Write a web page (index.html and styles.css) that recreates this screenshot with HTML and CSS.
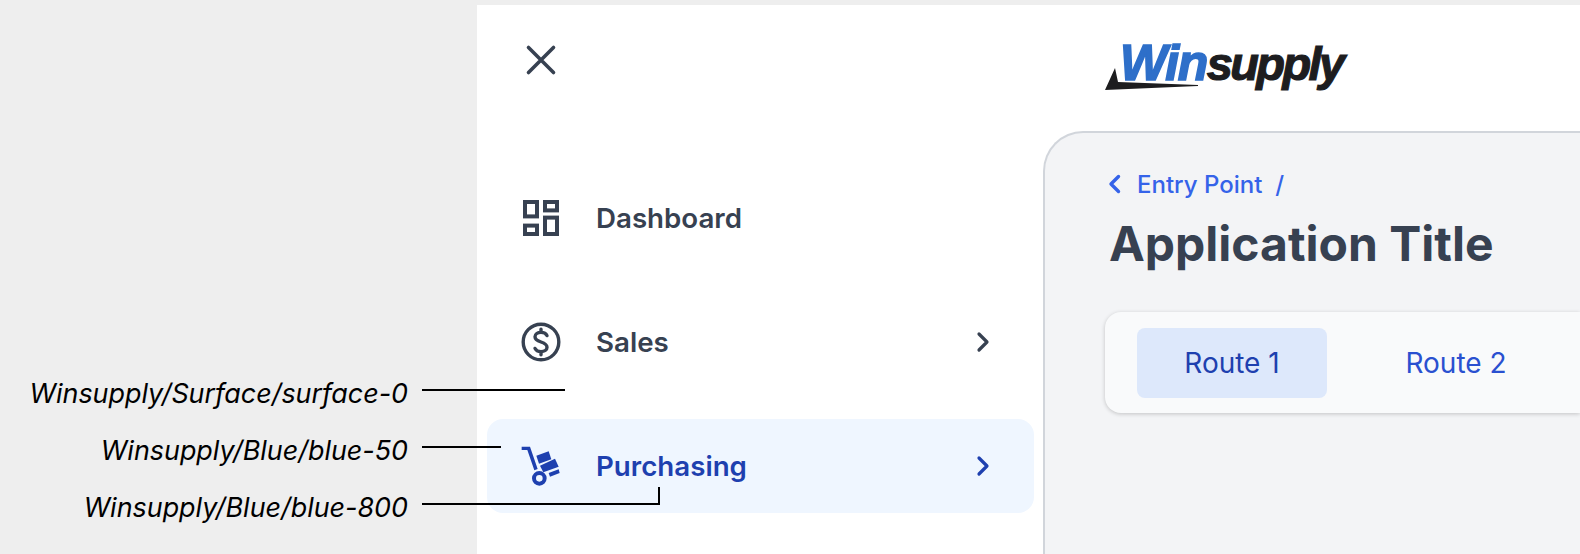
FILE: index.html
```html
<!DOCTYPE html>
<html lang="en">
<head>
    <meta charset="UTF-8">
    <meta name="viewport" content="width=device-width, initial-scale=1.0">
    <title>Navigation colours</title>
    <link rel="stylesheet" href="styles.css">
</head>
<body>
    <div class="frame">
        <div class="app">
            <aside class="sidebar">
                <button class="close-btn" aria-label="Close">
                    <svg width="34" height="34" viewBox="0 0 34 34" fill="none" stroke="currentColor" stroke-width="3.6" stroke-linecap="round">
                        <path d="M4.5 4.5 29.5 29.5M29.5 4.5 4.5 29.5"/>
                    </svg>
                </button>
                <nav class="nav">
                    <a class="nav-item">
                        <svg class="nav-icon" viewBox="-2 -2 40 40" fill="none" stroke="currentColor" stroke-width="4">
                            <rect x="2" y="2" width="12" height="14.4"/>
                            <rect x="22" y="2" width="12" height="8.4"/>
                            <rect x="2" y="25.6" width="12" height="8.4"/>
                            <rect x="22" y="17.6" width="12" height="16.4"/>
                        </svg>
                        <span>Dashboard</span>
                    </a>
                    <a class="nav-item">
                        <svg class="nav-icon" viewBox="0 0 40 40" fill="none" stroke="currentColor" stroke-width="3.4" stroke-linecap="round">
                            <circle cx="20" cy="20" r="17.8"/>
                            <path d="M26 13.6C25 11.4 23 10.4 20 10.4 16.6 10.4 14 12 14 14.8 14 18 17 19 20 20 23 21 26 22 26 25.2 26 28 23.4 29.6 20 29.6 17 29.6 15 28.6 14 26.4M20 7.2V10.4M20 29.6V32.8"/>
                        </svg>
                        <span>Sales</span>
                        <svg class="nav-chevron" viewBox="0 0 14 22" fill="none" stroke="currentColor" stroke-width="3.2" stroke-linecap="round" stroke-linejoin="round">
                            <path d="M3 3 11 11 3 19"/>
                        </svg>
                    </a>
                    <a class="nav-item active">
                        <svg class="nav-icon" viewBox="33 33 120 120" fill="currentColor">
                            <path d="M35 35H60L83 102 73 106 52 45H35Z"/>
                            <path fill-rule="evenodd" d="M88 108A22 22 0 1 0 88 152 22 22 0 1 0 88 108ZM88 120A10 10 0 1 1 88 140 10 10 0 1 1 88 120Z"/>
                            <path d="M79 62 116 49 124 73 87 86Z"/>
                            <path d="M90 92 135 71 146 95 100 112Z"/>
                            <path d="M116 114 146 103 149 114 120 125Z"/>
                        </svg>
                        <span>Purchasing</span>
                        <svg class="nav-chevron" viewBox="0 0 14 22" fill="none" stroke="currentColor" stroke-width="3.2" stroke-linecap="round" stroke-linejoin="round">
                            <path d="M3 3 11 11 3 19"/>
                        </svg>
                    </a>
                </nav>
            </aside>
            <main class="main">
                <header class="topbar">
                    <div class="logo">
                        <svg class="logo-swoosh" width="95" height="24" viewBox="0 0 95 24">
                            <path d="M0 22 10 0 13 14 93 17V18Z" fill="#1d1d1f"/>
                        </svg>
                        <span class="logo-win">Win</span><span class="logo-supply">supply</span>
                    </div>
                </header>
                <section class="card">
                    <div class="breadcrumb">
                        <svg width="14" height="20" viewBox="0 0 14 20" fill="none" stroke="currentColor" stroke-width="3.4" stroke-linecap="round" stroke-linejoin="round">
                            <path d="M11.5 2.5 4 10 11.5 17.5"/>
                        </svg>
                        <span class="crumb-link">Entry Point</span>
                        <span class="crumb-sep">/</span>
                    </div>
                    <h1>Application Title</h1>
                    <div class="tabs">
                        <a class="tab active">Route 1</a>
                        <a class="tab">Route 2</a>
                    </div>
                </section>
            </main>
        </div>
    </div>

    <!-- spec labels drawn over the mock -->
    <div class="note note-surface">
        <span>Winsupply/Surface/surface-0</span><i class="note-line"></i>
    </div>
    <div class="note note-50">
        <span>Winsupply/Blue/blue-50</span><i class="note-line"></i>
    </div>
    <div class="note note-800">
        <span>Winsupply/Blue/blue-800</span><i class="note-line"></i>
    </div>
</body>
</html>
```

FILE: styles.css
```css
* {
    box-sizing: border-box;
}
html, body {
    height: 100%;
}
body {
    margin: 0;
    background: #eeeeee;
    font-family: Inter, 'Noto Sans', sans-serif;
    overflow: hidden;
    position: relative;
}
.frame {
    height: 100%;
    padding: 5px 0 0 477px;
}
.app {
    display: flex;
    height: 100%;
    background: #ffffff;
}
.sidebar {
    width: 566px;
    flex-shrink: 0;
    padding-top: 38px;
}
.close-btn {
    display: block;
    margin-left: 47px;
    padding: 0;
    height: 34px;
    border: none;
    background: none;
    color: #374151;
}
.nav {
    display: flex;
    flex-direction: column;
    gap: 30px;
    margin: 94px 9px 0 10px;
}
.nav-item {
    display: flex;
    align-items: center;
    gap: 35px;
    height: 94px;
    padding: 0 44px 0 34px;
    border-radius: 16px;
    color: #374151;
    font-size: 27.7px;
    font-weight: 600;
}
.nav-item.active {
    background: #eff6ff;
    color: #1e40af;
}
.nav-icon {
    width: 40px;
    height: 40px;
    flex-shrink: 0;
}
.nav-chevron {
    width: 14px;
    height: 22px;
    margin-left: auto;
}
.main {
    flex: 1;
    display: flex;
    flex-direction: column;
    min-width: 0;
}
.topbar {
    height: 126px;
    flex-shrink: 0;
    padding: 28px 0 0 77px;
}
.logo {
    position: relative;
    display: inline-block;
    font-family: 'Liberation Sans', Arial, sans-serif;
    font-weight: 700;
    font-style: italic;
    line-height: 60px;
    white-space: nowrap;
}
.logo-win {
    color: #2e6fc9;
    font-size: 50px;
    letter-spacing: -1.5px;
    -webkit-text-stroke: 1.6px #2e6fc9;
}
.logo-supply {
    color: #1d1d1f;
    font-size: 47px;
    letter-spacing: -2.6px;
    -webkit-text-stroke: 1.2px #1d1d1f;
}
.logo-swoosh {
    position: absolute;
    left: -15px;
    top: 35px;
}
.card {
    flex: 1;
    padding: 31px 0 0 60px;
    background: #f3f4f6;
    border: 2px solid #d1d5db;
    border-width: 2px 0 0 2px;
    border-top-left-radius: 40px;
}
.breadcrumb {
    display: flex;
    align-items: center;
    height: 40px;
    padding-left: 2px;
    color: #3563e9;
    font-size: 24px;
    font-weight: 500;
}
.crumb-link {
    margin-left: 16px;
}
.crumb-sep {
    margin-left: 13px;
}
h1 {
    margin: 10px 0 0 4px;
    color: #374151;
    font-size: 48px;
    line-height: 60px;
    font-weight: 700;
}
.tabs {
    display: flex;
    gap: 34px;
    margin-top: 38px;
    height: 101px;
    padding: 16px 0 0 32px;
    background: #f9fafb;
    border-radius: 16px 0 0 16px;
    box-shadow: 0 1px 4px rgba(0, 0, 0, 0.2);
}
.tab {
    display: flex;
    align-items: center;
    justify-content: center;
    width: 190px;
    height: 70px;
    border-radius: 8px;
    color: #2a50d0;
    font-size: 28px;
}
.tab.active {
    background: #dde8fb;
    color: #1e40af;
}
/* annotations */
.note {
    position: absolute;
    display: flex;
    align-items: center;
    right: calc(100% - 422px);
    height: 34px;
    width: 420px;
    justify-content: flex-end;
    padding-right: 14px;
    font-size: 26.9px;
    font-style: italic;
    color: #000000;
    white-space: nowrap;
}
.note span {
    padding-top: 6px;
}
.note-line {
    position: absolute;
    left: 100%;
    top: 50%;
    height: 2px;
    margin-top: -1px;
    background: #000000;
}
.note-surface {
    top: 373px;
}
.note-surface .note-line {
    width: 143px;
}
.note-50 {
    top: 430px;
}
.note-50 .note-line {
    width: 79px;
}
.note-800 {
    top: 487px;
}
.note-800 .note-line {
    width: 238px;
}
.note-800 .note-line::after {
    content: "";
    position: absolute;
    right: 0;
    bottom: 0;
    width: 2px;
    height: 18px;
    background: #000000;
}
```
